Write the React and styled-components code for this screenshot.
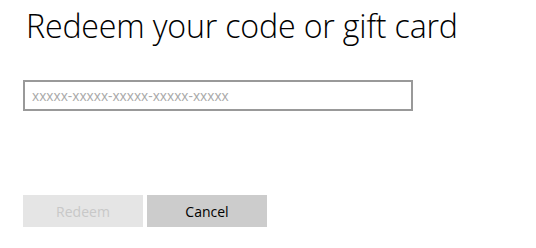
import React from "react"
import styled, { createGlobalStyle } from "styled-components"

const GlobalStyle = createGlobalStyle`
    html, body {
        margin: 0;
        padding: 0;
        background: #ffffff;
    }
    body {
        font-family: "Open Sans", "Segoe UI", sans-serif;
    }
`

const Page = styled.div`
    width: 536px;
    height: 248px;
    box-sizing: border-box;
    padding: 6px 23px 0 23px;
    display: flex;
    flex-direction: column;
`

const Title = styled.h1`
    margin: 0;
    font-family: "Open Sans", sans-serif;
    font-weight: 300;
    font-size: 32.2px;
    line-height: 40px;
    color: #000000;
    padding-left: 3px;
    letter-spacing: -0.2px;
    white-space: nowrap;
`

const CodeInput = styled.input`
    margin-top: 34px;
    width: 390px;
    height: 31px;
    box-sizing: border-box;
    border: 2px solid #999999;
    padding: 0 7px;
    font-family: "Open Sans", sans-serif;
    font-size: 13.7px;
    color: #000;
    outline: none;

    &::placeholder {
        color: #a9a9a9;
    }
`

const Actions = styled.div`
    margin-top: 84px;
    display: flex;
    gap: 4px;
`

const ActionButton = styled.button`
    width: 120px;
    height: 32px;
    border: none;
    padding: 0;
    font-family: "Open Sans", sans-serif;
    font-size: 14px;
    background: ${(p) => (p.$primary ? "#e5e5e5" : "#cccccc")};
    color: ${(p) => (p.$primary ? "#c8c8c8" : "#000000")};
`

export default function App() {
    return (
        <>
            <GlobalStyle />
            <Page>
                <Title>Redeem your code or gift card</Title>
                <CodeInput placeholder="xxxxx-xxxxx-xxxxx-xxxxx-xxxxx" />
                <Actions>
                    <ActionButton $primary disabled>
                        Redeem
                    </ActionButton>
                    <ActionButton>Cancel</ActionButton>
                </Actions>
            </Page>
        </>
    )
}
